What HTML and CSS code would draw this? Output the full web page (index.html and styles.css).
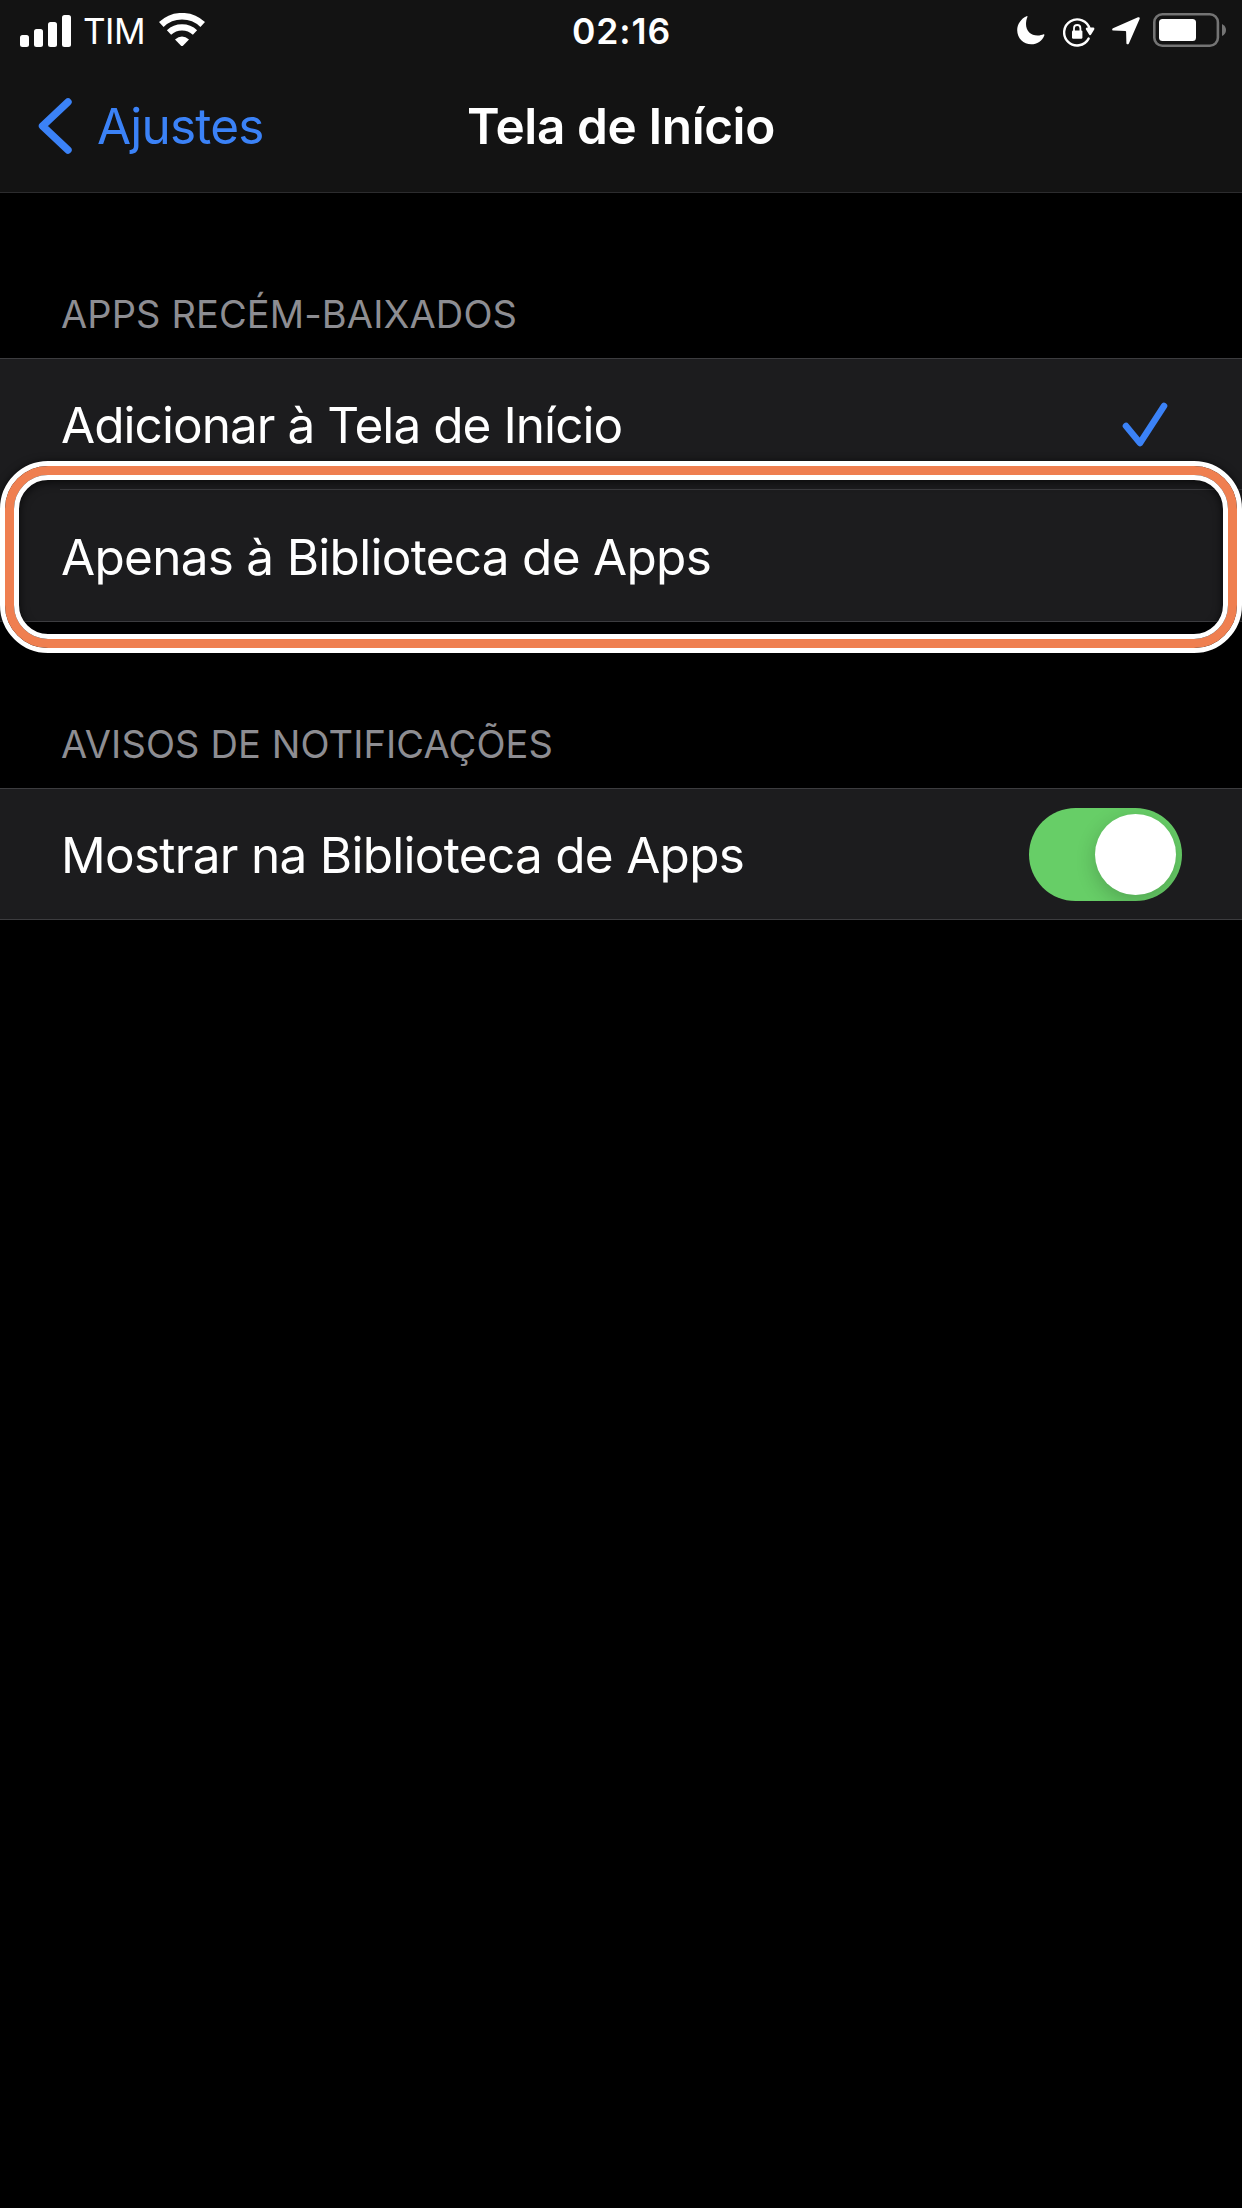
FILE: index.html
```html
<!DOCTYPE html>
<html lang="pt-BR">
<head>
  <meta charset="UTF-8">
  <title>Tela de Início</title>
  <link rel="stylesheet" href="styles.css">
</head>
<body>
  <header class="top">
    <div class="status">
      <div class="status-left">
        <svg class="signal" width="51" height="32" viewBox="0 0 51 32" fill="#fff">
          <rect x="0" y="20" width="9" height="12" rx="2.5"/>
          <rect x="14" y="14" width="9" height="18" rx="2.5"/>
          <rect x="28" y="7" width="9" height="25" rx="2.5"/>
          <rect x="42" y="0" width="9" height="32" rx="2.5"/>
        </svg>
        <span class="carrier">TIM</span>
        <svg class="wifi" width="46" height="34" viewBox="0 0 46 34" fill="none" stroke="#fff">
          <path d="M2.3 11.5A30 30 0 0 1 43.7 11.5" stroke-width="6.6"/>
          <path d="M10 19.6A19 19 0 0 1 36 19.6" stroke-width="6.2"/>
          <path d="M16 26.4Q23 20.4 30 26.4L24.2 32.4Q23 33.6 21.8 32.4Z" fill="#fff" stroke="none"/>
        </svg>
      </div>
      <span class="clock">02:16</span>
      <div class="status-right">
        <svg width="28" height="29" viewBox="0 0 28 29" fill="#fff">
          <path d="M10.5 .7C9.5 3 9 5.500 9 8C9 15 14 19.500 20.500 19.500C23 19.500 25.200 18.800 26.500 18.200Q27.800 18 27.300 19.400C25.200 25 20 28.300 14.300 28.300C6.400 28.300 .2 22.200 .2 14.300C.2 8 4 2.700 9.500 .2Q10.800 -.1 10.500 .7Z"/>
        </svg>
        <svg class="lock" width="32" height="30" viewBox="0 0 32 30" fill="none" stroke="#fff" stroke-width="2.4">
          <path d="M26.700 12A13 13 0 1 0 25.600 21.600" stroke-linecap="round"/>
          <path d="M24 11.800L30.200 11.800L27.100 17Z" fill="#fff" stroke-linejoin="round"/>
          <rect x="9" y="13.400" width="10.400" height="8.400" rx="1.200" fill="#fff" stroke="none"/>
          <path d="M11 14V11.200A3.200 3.200 0 0 1 17.400 11.200V14" stroke-width="1.800"/>
        </svg>
        <svg class="arrow" width="28" height="28" viewBox="0 0 28 28" fill="#fff">
          <path d="M26 .3L1 11.200C-.2 11.800 -.1 13.400 1.300 13.500L13.300 13.900C13.800 13.900 14.100 14.200 14.100 14.700L14.400 26.200C14.500 27.600 16.200 27.800 16.900 26.500L27.600 2C28.100 .7 27.200 -.2 26 .3Z"/>
        </svg>
        <svg class="battery" width="74" height="34" viewBox="0 0 74 34">
          <rect x="1.300" y="1.300" width="63.600" height="31.400" rx="8" fill="none" stroke="#747474" stroke-width="2.600"/>
          <rect x="6" y="6" width="37" height="22" rx="3.500" fill="#fff"/>
          <path d="M69 11Q73 13 73 17T69 23Z" fill="#747474"/>
        </svg>
      </div>
    </div>
    <nav class="navbar">
      <a class="back">
        <svg width="34" height="58" viewBox="0 0 34 58" fill="none" stroke="#3b82f7" stroke-width="7.400" stroke-linecap="round" stroke-linejoin="round">
          <path d="M30 5L4.500 29L30 53"/>
        </svg>
        <span>Ajustes</span>
      </a>
      <h1 class="title">Tela de Início</h1>
    </nav>
  </header>

  <main>
    <section class="first">
      <h2>APPS RECÉM-BAIXADOS</h2>
      <div class="group">
        <div class="row">
          <span class="label tight">Adicionar à Tela de Início</span>
          <svg class="check" width="46" height="46" viewBox="0 0 46 46" fill="none" stroke="#3b82f7" stroke-width="6.600" stroke-linecap="round" stroke-linejoin="round">
            <path d="M4 24L18 41L42 4"/>
          </svg>
        </div>
        <div class="row selected">
          <span class="label">Apenas à Biblioteca de Apps</span>
          <div class="highlight"></div>
        </div>
      </div>
    </section>

    <section class="second">
      <h2>AVISOS DE NOTIFICAÇÕES</h2>
      <div class="group">
        <div class="row">
          <span class="label">Mostrar na Biblioteca de Apps</span>
          <div class="switch"><div class="knob"></div></div>
        </div>
      </div>
    </section>
  </main>
</body>
</html>
```

FILE: styles.css
```css
* {
  box-sizing: border-box;
}
body {
  margin: 0;
  min-height: 2208px;
  background-color: #000;
  color: #fff;
  font-family: Inter, "Liberation Sans", sans-serif;
  font-size: 49.5px;
}
.top {
  height: 193px;
  background-color: #131313;
  border-bottom: 1px solid #2c2c2e;
}

/* status bar */
.status {
  display: grid;
  grid-template-columns: 1fr auto 1fr;
  align-items: center;
  height: 60px;
  padding: 0 15px 0 20px;
}
.status-left,
.status-right {
  display: flex;
  align-items: center;
}
.status-right {
  justify-content: flex-end;
}
.carrier {
  margin: 1px 14px 0 12px;
  width: 62px;
  font-size: 35px;
  line-height: 60px;
  letter-spacing: -0.5px;
  white-space: nowrap;
}
.wifi {
  margin-top: -2px;
}
.clock {
  margin-right: 4px;
  padding-top: 2px;
  font-size: 35.5px;
  font-weight: 600;
  line-height: 58px;
  letter-spacing: 0.9px;
}
.lock {
  margin: 3px 0 0 18px;
}
.arrow {
  margin: 1px 13px 0 17px;
}
.battery {
  margin-top: -1px;
}

/* nav bar */
.navbar {
  display: grid;
  grid-template-columns: 1fr auto 1fr;
  align-items: center;
  height: 132px;
  padding: 0 38px;
}
.back {
  display: flex;
  align-items: center;
  gap: 25px;
  color: #3b82f7;
  letter-spacing: -0.8px;
}
.title {
  margin: 0;
  font-size: 49.5px;
  font-weight: 600;
  letter-spacing: -0.4px;
}

/* lists */
h2 {
  margin: 0;
  padding: 0 61px;
  height: 67px;
  font-size: 38px;
  font-weight: 400;
  line-height: 46px;
  letter-spacing: 0.12px;
  color: #8d8d92;
}
.first {
  padding-top: 98px;
}
.second {
  padding-top: 99px;
}
.group {
  background-color: #1c1c1e;
  border-top: 1px solid #3c3c3f;
  border-bottom: 1px solid #3c3c3f;
}
.row {
  position: relative;
  display: flex;
  align-items: center;
  justify-content: space-between;
  height: 130px;
  padding: 0 60px 0 61px;
  white-space: nowrap;
}
.label {
  padding-top: 1px;
  letter-spacing: -0.72px;
}
.tight {
  letter-spacing: -0.95px;
}
.selected {
  height: 132px;
}
.selected .label {
  padding-top: 3px;
}
.selected::before {
  content: "";
  position: absolute;
  top: 0;
  left: 60px;
  right: 0;
  height: 1px;
  background-color: #3c3c3f;
}
.check {
  margin: 2px 14px 0 0;
}

/* outline drawn around the chosen option */
.highlight {
  position: absolute;
  top: -28px;
  left: 0;
  width: 1242px;
  height: 192px;
  border: 5px solid #fff;
  border-radius: 48px;
  box-shadow: 0 1px 8px rgba(0, 0, 0, 0.7);
}
.highlight::before {
  content: "";
  position: absolute;
  inset: 0;
  border: 9px solid #ef7f50;
  border-radius: 43px;
}
.highlight::after {
  content: "";
  position: absolute;
  inset: 9px;
  border: 5px solid #fff;
  border-radius: 34px;
  box-shadow: inset 0 2px 10px rgba(0, 0, 0, 0.7);
}

.switch {
  display: flex;
  justify-content: flex-end;
  width: 153px;
  height: 93px;
  padding: 6px;
  border-radius: 47px;
  background-color: #67ce67;
  overflow: hidden;
}
.knob {
  width: 81px;
  height: 81px;
  border-radius: 50%;
  background-color: #fff;
  box-shadow: 0 6px 20px rgba(0, 0, 0, 0.2);
}
```
